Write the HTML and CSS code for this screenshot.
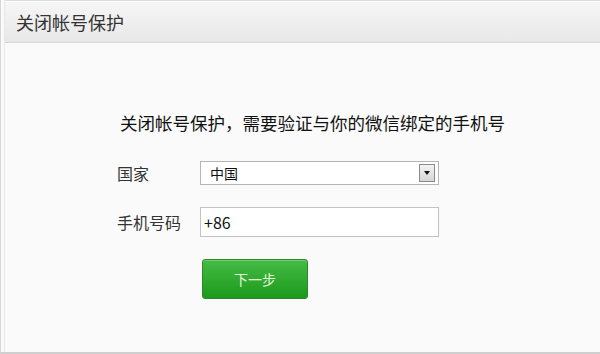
FILE: index.html
```html
<!DOCTYPE html>
<html lang="zh-CN">
<head>
  <meta charset="UTF-8">
  <meta name="viewport" content="width=device-width, initial-scale=1.0">
  <title>关闭帐号保护</title>
  <link rel="stylesheet" href="styles.css">
</head>
<body>
  <div class="frame">
    <div class="inner">
      <div class="header">
        <h1>关闭帐号保护</h1>
      </div>
      <div class="content">
        <h2>关闭帐号保护，需要验证与你的微信绑定的手机号</h2>
        <form class="form">
          <!-- 国家 -->
          <div class="row">
            <label class="label">国家</label>
            <div class="select">
              <span class="select-text">中国</span>
              <span class="select-arrow"><span class="triangle"></span></span>
            </div>
          </div>

          <!-- 手机号码 -->
          <div class="row row-phone">
            <label class="label" for="phone">手机号码</label>
            <input id="phone" class="input" type="text" value="+86">
          </div>

          <button type="button" class="btn">下一步</button>
        </form>
      </div>
    </div>
  </div>
</body>
</html>
```

FILE: styles.css
```css
body {
  margin: 0;
  padding: 0;
  background-color: #fafafa;
  font-family: "Noto Sans CJK SC", "Microsoft YaHei", sans-serif;
  color: #222;
}

.frame {
  height: 354px;
  box-sizing: border-box;
  border-left: 1px solid #d6d6d6;
  border-bottom: 2px solid #cfcfcf;
  padding-left: 3px;
}

.inner {
  height: 100%;
  border-left: 1px solid #e6e6e6;
}

.header {
  height: 41px;
  border-top: 1px solid #dcdcdc;
  border-bottom: 1px solid #d4d4d4;
  background: linear-gradient(#f6f6f6, #e8e8e8);
  box-shadow: 0 1px 0 #fff, inset 0 1px 0 #fff;
  display: flex;
  align-items: center;
  padding-left: 11px;
}

h1 {
  margin: 0;
  font-size: 18px;
  font-weight: normal;
  color: #333;
}

.content {
  padding-top: 68px;
}

h2 {
  margin: 0 0 0 115px;
  font-size: 17.5px;
  line-height: 24px;
  font-weight: normal;
  color: #111;
}

.form {
  margin: 26px 0 0 112px;
  display: flex;
  flex-direction: column;
  align-items: flex-start;
}

.row {
  display: flex;
  align-items: center;
}

.row-phone {
  margin-top: 22px;
}

.label {
  width: 83px;
  font-size: 16px;
  color: #333;
}

.select {
  width: 239px;
  height: 24px;
  box-sizing: border-box;
  border: 1px solid #b5b5b5;
  background: #fff;
  display: flex;
  align-items: center;
  justify-content: space-between;
  padding: 0 3px 0 9px;
}

.select-text {
  font-size: 14px;
  color: #111;
}

.select-arrow {
  width: 16px;
  height: 18px;
  box-sizing: border-box;
  border: 1px solid #8a8a8a;
  background: linear-gradient(#f4f4f4, #d6d6d6);
  display: flex;
  align-items: center;
  justify-content: center;
}

.triangle {
  width: 0;
  height: 0;
  border-left: 3px solid transparent;
  border-right: 3px solid transparent;
  border-top: 4px solid #111;
}

.input {
  width: 239px;
  height: 30px;
  box-sizing: border-box;
  margin: 0;
  border: 1px solid #c2c2c2;
  background: #fff;
  padding: 0 0 0 3px;
  font-family: inherit;
  font-size: 16px;
  color: #111;
}

.btn {
  margin: 22px 0 0 85px;
  width: 106px;
  height: 40px;
  border: 1px solid #2a8a2a;
  border-radius: 3px;
  background: linear-gradient(#45bb45, #1b9a1b);
  box-shadow: inset 0 1px 0 rgba(255, 255, 255, 0.25);
  color: #e6f7dc;
  font-family: inherit;
  font-size: 14px;
  cursor: pointer;
}

.btn:hover {
  background: linear-gradient(#3cb23c, #168e16);
}
```
